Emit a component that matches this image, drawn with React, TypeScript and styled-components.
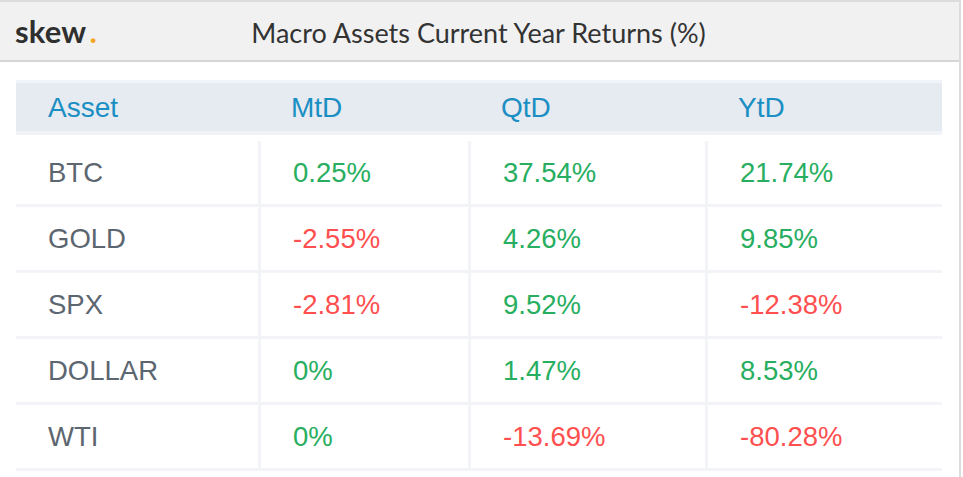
import React from "react";
import styled, { createGlobalStyle } from "styled-components";

const Global = createGlobalStyle`
  html, body { margin: 0; padding: 0; background: #ffffff; }
  body { width: 963px; height: 477px; overflow: hidden; }
`;

const Panel = styled.div`
  width: 961px;
  height: 477px;
  border-top: 2px solid #dcdcdc;
  border-right: 2px solid #dcdcdc;
  box-sizing: border-box;
  background: #ffffff;
`;

const Header = styled.div`
  position: relative;
  height: 60px;
  box-sizing: border-box;
  background: #f1f1f1;
  border-bottom: 2px solid #d6d6d6;
  display: flex;
  align-items: center;
  justify-content: center;
`;

const Logo = styled.div`
  position: absolute;
  left: 15px;
  top: 10px;
  font-family: Lato, "Open Sans", sans-serif;
  font-weight: 700;
  font-size: 31px;
  color: #2f2f2f;
  letter-spacing: 0.2px;
`;

const Dot = styled.span`
  color: #f5a623;
  margin-left: 3px;
`;

const Title = styled.div`
  font-family: Lato, "Open Sans", sans-serif;
  font-size: 27px;
  color: #333333;
  margin-top: 2px;
  margin-left: -2px;
`;

const Body = styled.div`
  padding: 18px 0 0 16px;
  width: 926px;
`;

const grid = `
  display: grid;
  grid-template-columns: 245px 210px 237px 234px;
`;

const HeadRow = styled.div`
  ${grid}
  height: 48px;
  align-items: center;
  background: #e6eaf1;
  border-top: 3px solid #f0f3f8;
  border-bottom: 4px solid #f0f3f8;
  margin-bottom: 6px;
`;

const HeadCell = styled.div<{ $first?: boolean }>`
  padding-left: ${(p) => (p.$first ? "32px" : "30px")};
  padding-top: 2px;
  font-family: "Liberation Sans", Arial, sans-serif;
  font-size: 28px;
  color: #1a8fc3;
`;

const Row = styled.div`
  ${grid}
  height: 63px;
  border-bottom: 3px solid #f3f4f8;
  box-sizing: content-box;
`;

const Cell = styled.div<{ $tone: "name" | "pos" | "neg"; $last?: boolean }>`
  display: flex;
  align-items: center;
  padding-left: 32px;
  border-right: ${(p) => (p.$last ? "none" : "3px solid #f3f4f8")};
  font-family: "Liberation Sans", Arial, sans-serif;
  font-size: 27.5px;
  padding-top: 1px;
  color: ${(p) =>
    p.$tone === "name" ? "#5c6670" : p.$tone === "pos" ? "#27ae60" : "#ff4f4f"};
`;

const rows: [string, string, string, string][] = [
  ["BTC", "0.25%", "37.54%", "21.74%"],
  ["GOLD", "-2.55%", "4.26%", "9.85%"],
  ["SPX", "-2.81%", "9.52%", "-12.38%"],
  ["DOLLAR", "0%", "1.47%", "8.53%"],
  ["WTI", "0%", "-13.69%", "-80.28%"],
];

const tone = (v: string) => (v.startsWith("-") ? "neg" : "pos");

export default function App() {
  return (
    <>
      <Global />
      <Panel>
        <Header>
          <Logo>
            skew<Dot>.</Dot>
          </Logo>
          <Title>Macro Assets Current Year Returns (%)</Title>
        </Header>
        <Body>
          <HeadRow>
            <HeadCell $first>Asset</HeadCell>
            <HeadCell>MtD</HeadCell>
            <HeadCell>QtD</HeadCell>
            <HeadCell>YtD</HeadCell>
          </HeadRow>
          {rows.map((r) => (
            <Row key={r[0]}>
              <Cell $tone="name">{r[0]}</Cell>
              <Cell $tone={tone(r[1])}>{r[1]}</Cell>
              <Cell $tone={tone(r[2])}>{r[2]}</Cell>
              <Cell $tone={tone(r[3])} $last>
                {r[3]}
              </Cell>
            </Row>
          ))}
        </Body>
      </Panel>
    </>
  );
}
